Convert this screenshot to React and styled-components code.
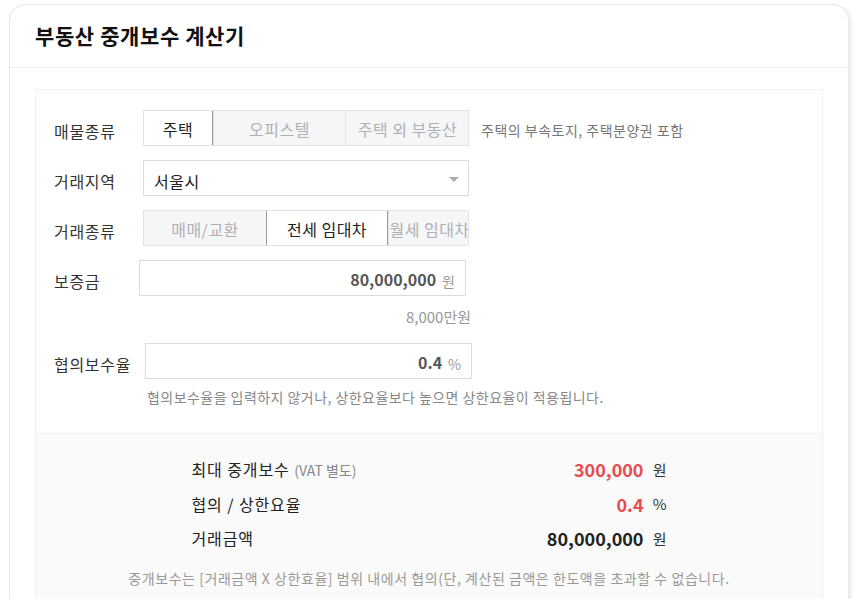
import React from "react";
import styled, { createGlobalStyle } from "styled-components";

const propertyTypes = ["주택", "오피스텔", "주택 외 부동산"];
const dealTypes = ["매매/교환", "전세 임대차", "월세 임대차"];

export default function App() {
    return (
        <>
            <GlobalStyle />
            <Card>
                <Header>
                    <Title>부동산 중개보수 계산기</Title>
                </Header>
                <Body>
                    <Panel>
                        <Form>
                            <Row>
                                <Label>매물종류</Label>
                                <Segment>
                                    {propertyTypes.map((t, i) => (
                                        <SegButton key={t} $active={i === 0} $w={[70, 132, 124][i]}>
                                            {t}
                                        </SegButton>
                                    ))}
                                </Segment>
                                <Note>주택의 부속토지, 주택분양권 포함</Note>
                            </Row>
                            <Row>
                                <Label>거래지역</Label>
                                <Select>
                                    서울시
                                    <Caret />
                                </Select>
                            </Row>
                            <Row>
                                <Label>거래종류</Label>
                                <Segment>
                                    {dealTypes.map((t, i) => (
                                        <SegButton key={t} $active={i === 1} $w={[122, 122, 82][i]}>
                                            {t}
                                        </SegButton>
                                    ))}
                                </Segment>
                            </Row>
                            <Row>
                                <Label $w={85}>보증금</Label>
                                <NumberBox>
                                    <Value>80,000,000</Value>
                                    <Unit>원</Unit>
                                </NumberBox>
                            </Row>
                            <Converted>8,000만원</Converted>
                            <Row $top={16}>
                                <Label $w={91}>협의보수율</Label>
                                <NumberBox>
                                    <Value>0.4</Value>
                                    <Unit>%</Unit>
                                </NumberBox>
                            </Row>
                            <Help>협의보수율을 입력하지 않거나, 상한요율보다 높으면 상한요율이 적용됩니다.</Help>
                        </Form>
                        <Result>
                            <ResultTable>
                                <ResultRow>
                                    <ResultLabel>
                                        최대 중개보수 <Small>(VAT 별도)</Small>
                                    </ResultLabel>
                                    <ResultValue $red>300,000</ResultValue>
                                    <ResultUnit>원</ResultUnit>
                                </ResultRow>
                                <ResultRow>
                                    <ResultLabel>협의 / 상한요율</ResultLabel>
                                    <ResultValue $red>0.4</ResultValue>
                                    <ResultUnit>%</ResultUnit>
                                </ResultRow>
                                <ResultRow>
                                    <ResultLabel>거래금액</ResultLabel>
                                    <ResultValue>80,000,000</ResultValue>
                                    <ResultUnit>원</ResultUnit>
                                </ResultRow>
                            </ResultTable>
                            <Footnote>
                                중개보수는 [거래금액 X 상한효율] 범위 내에서 협의(단, 계산된 금액은 한도액을 초과할 수 없습니다.
                            </Footnote>
                        </Result>
                    </Panel>
                </Body>
            </Card>
        </>
    );
}

// Styled Components

const GlobalStyle = createGlobalStyle`
    body {
        margin: 0;
        background: #fff;
        font-family: "Noto Sans CJK KR", "Noto Sans", sans-serif;
        color: #222;
    }
`;

const Card = styled.div`
    margin: 4px 0 0 9px;
    width: 840px;
    height: 640px;
    box-sizing: border-box;
    border: 1px solid #e6e6e6;
    border-radius: 16px;
    box-shadow: 5px 0 0 -2px #f3f3f3;
    overflow: hidden;
`;

const Header = styled.div`
    height: 62px;
    padding-left: 25px;
    display: flex;
    align-items: center;
    border-bottom: 1px solid #efefef;
`;

const Title = styled.h1`
    margin: 0;
    font-size: 21px;
    font-weight: 700;
    color: #111;
    letter-spacing: 0.6px;
    padding-bottom: 2px;
`;

const Body = styled.div`
    padding: 21px 25px 0;
`;

const Panel = styled.div`
    border: 1px solid #f1f1f1;
`;

const Form = styled.div`
    padding: 20px 18px 26px;
    display: flex;
    flex-direction: column;
`;

const Row = styled.div`
    display: flex;
    align-items: center;
    height: 36px;
    margin-top: ${(p) => (p.$top ?? 14)}px;
    &:first-child {
        margin-top: 0;
    }
`;

const Label = styled.div`
    width: ${(p) => p.$w ?? 89}px;
    flex-shrink: 0;
    font-size: 16px;
    letter-spacing: 0.7px;
    color: #333;
    padding-top: 5px;
`;

const Segment = styled.div`
    display: flex;
    width: 326px;
    height: 36px;
    box-sizing: border-box;
    border: 1px solid #e3e3e3;
    background: #f5f6f8;
    overflow: hidden;
`;

const SegButton = styled.div`
    width: ${(p) => p.$w}px;
    flex-shrink: 0;
    box-sizing: border-box;
    display: flex;
    align-items: center;
    justify-content: center;
    white-space: nowrap;
    font-size: 16px;
    letter-spacing: 0.5px;
    padding-top: 1px;
    color: ${(p) => (p.$active ? "#222" : "#b0b0b0")};
    background: ${(p) => (p.$active ? "#fff" : "transparent")};
    border: ${(p) => (p.$active ? "1px solid #9a9a9a" : "none")};
    border-left: ${(p) => (p.$active ? "1px solid #9a9a9a" : "1px solid #e3e3e3")};
    margin: ${(p) => (p.$active ? "-1px 0" : "0")};
    &:first-child {
        border-left: ${(p) => (p.$active ? "1px solid #9a9a9a" : "none")};
        margin-left: ${(p) => (p.$active ? "-1px" : "0")};
    }
`;

const Note = styled.div`
    margin-left: 12px;
    font-size: 14px;
    letter-spacing: 0.5px;
    color: #777;
    padding-top: 4px;
`;

const Select = styled.div`
    position: relative;
    width: 326px;
    height: 36px;
    box-sizing: border-box;
    border: 1px solid #dcdcdc;
    background: #fff;
    display: flex;
    align-items: center;
    padding: 5px 0 0 10px;
    font-size: 16px;
    letter-spacing: 0.5px;
    color: #222;
`;

const Caret = styled.span`
    position: absolute;
    right: 9px;
    top: 16px;
    width: 0;
    height: 0;
    border-left: 5px solid transparent;
    border-right: 5px solid transparent;
    border-top: 5px solid #aaa;
`;

const NumberBox = styled.div`
    width: 327px;
    height: 36px;
    box-sizing: border-box;
    border: 1px solid #dcdcdc;
    background: #fff;
    display: flex;
    align-items: center;
    justify-content: flex-end;
    padding: 2px 10px 0 0;
    gap: 6px;
`;

const Value = styled.span`
    font-size: 16px;
    font-weight: 700;
    color: #555;
`;

const Unit = styled.span`
    font-size: 14px;
    color: #999;
    padding-top: 4px;
`;

const Converted = styled.div`
    margin-top: 10px;
    width: 417px;
    text-align: right;
    font-size: 15px;
    color: #999;
`;

const Help = styled.div`
    margin-top: 8px;
    padding-left: 93px;
    font-size: 14px;
    letter-spacing: 0.45px;
    color: #888;
`;

const Result = styled.div`
    background: #fafafa;
    border-top: 1px solid #f1f1f1;
    padding: 22px 0 40px;
    display: flex;
    flex-direction: column;
    align-items: center;
`;

const ResultTable = styled.div`
    width: 475px;
    display: flex;
    flex-direction: column;
    gap: 8.5px;
`;

const ResultRow = styled.div`
    display: flex;
    align-items: center;
    height: 26px;
`;

const ResultLabel = styled.div`
    flex: 1;
    font-size: 16px;
    letter-spacing: 0.9px;
    color: #222;
`;

const Small = styled.span`
    font-size: 14px;
    letter-spacing: 0;
    color: #888;
`;

const ResultValue = styled.div`
    font-size: 18px;
    font-weight: 700;
    color: ${(p) => (p.$red ? "#e84c4f" : "#222")};
`;

const ResultUnit = styled.div`
    width: 23px;
    text-align: right;
    font-size: 15px;
    color: #333;
`;

const Footnote = styled.div`
    margin-top: 17px;
    font-size: 14px;
    letter-spacing: 0.55px;
    color: #999;
`;
